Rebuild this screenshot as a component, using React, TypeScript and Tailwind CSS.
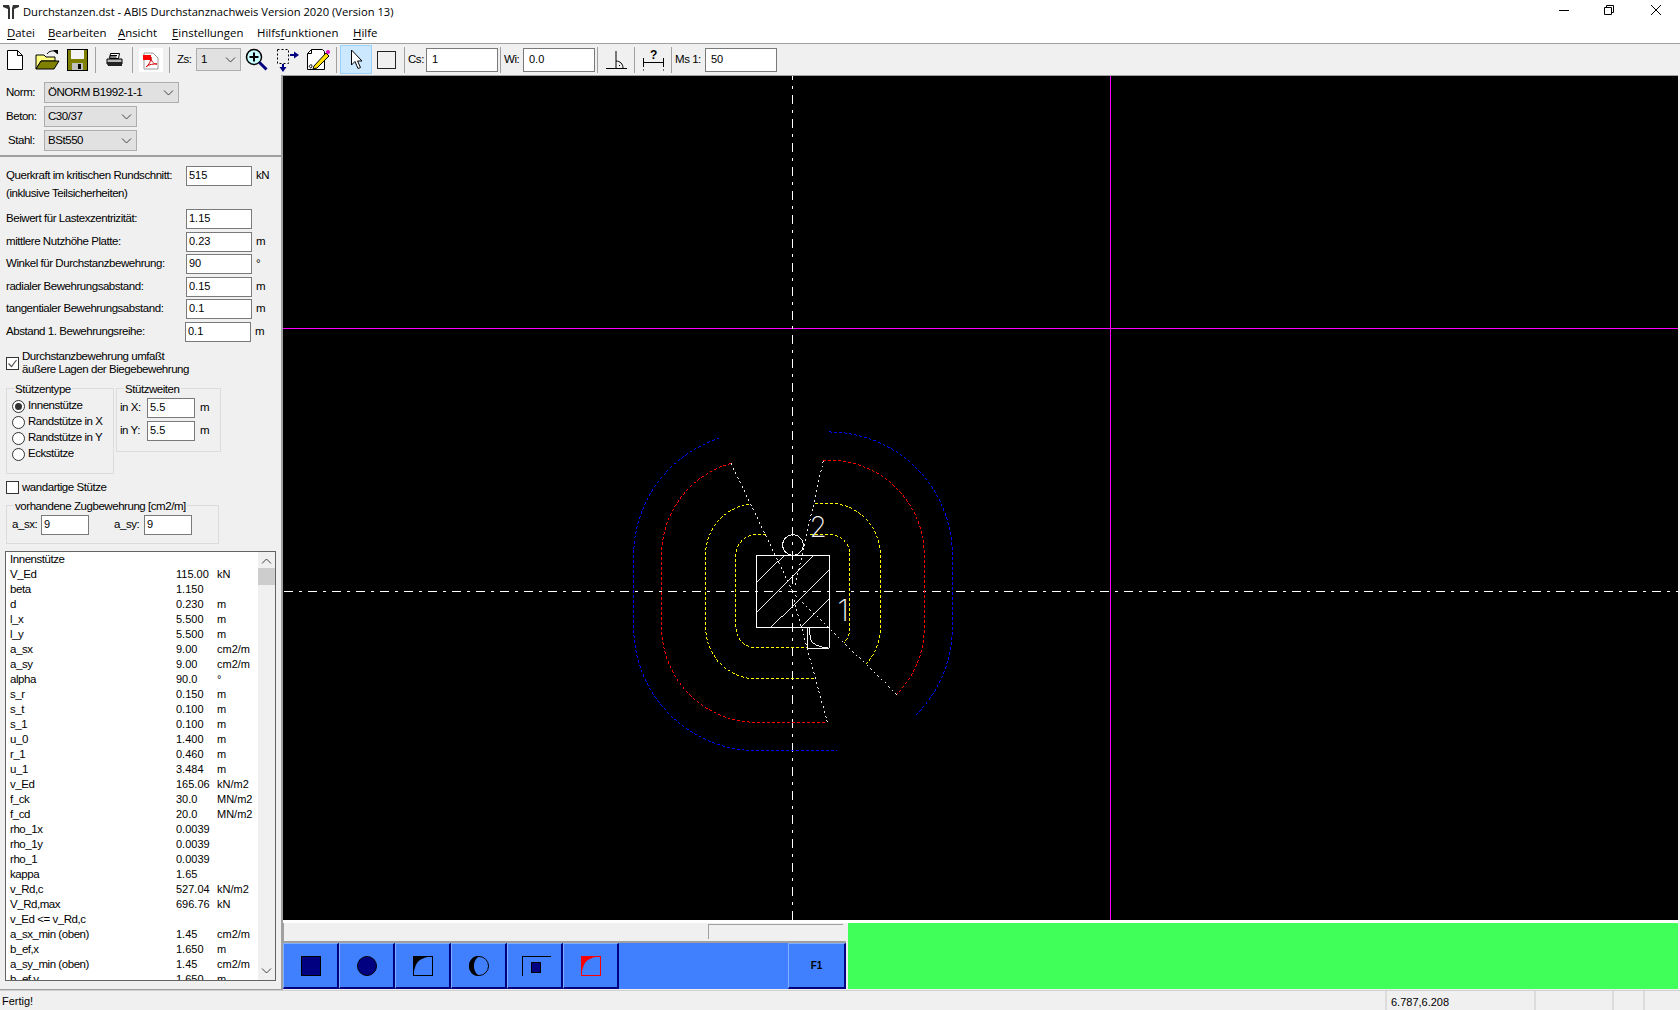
import { ReactNode } from 'react';

const UI_FONT = "font-['Liberation_Sans',Arial,sans-serif]";

const RESULTS: [string, string?, string?][] = [
  ['Innenstütze'],
  ['V_Ed', '115.00', 'kN'],
  ['beta', '1.150'],
  ['d', '0.230', 'm'],
  ['l_x', '5.500', 'm'],
  ['l_y', '5.500', 'm'],
  ['a_sx', '9.00', 'cm2/m'],
  ['a_sy', '9.00', 'cm2/m'],
  ['alpha', '90.0', '°'],
  ['s_r', '0.150', 'm'],
  ['s_t', '0.100', 'm'],
  ['s_1', '0.100', 'm'],
  ['u_0', '1.400', 'm'],
  ['r_1', '0.460', 'm'],
  ['u_1', '3.484', 'm'],
  ['v_Ed', '165.06', 'kN/m2'],
  ['f_ck', '30.0', 'MN/m2'],
  ['f_cd', '20.0', 'MN/m2'],
  ['rho_1x', '0.0039'],
  ['rho_1y', '0.0039'],
  ['rho_1', '0.0039'],
  ['kappa', '1.65'],
  ['v_Rd,c', '527.04', 'kN/m2'],
  ['V_Rd,max', '696.76', 'kN'],
  ['v_Ed <= v_Rd,c'],
  ['a_sx_min (oben)', '1.45', 'cm2/m'],
  ['b_ef,x', '1.650', 'm'],
  ['a_sy_min (oben)', '1.45', 'cm2/m'],
  ['b_ef,y', '1.650', 'm'],
];

function Chevron({ className = '' }: { className?: string }) {
  return (
    <svg width="11" height="6" viewBox="0 0 11 6" className={className} fill="none" stroke="#404040">
      <path d="M1 .5l4.5 4.5L10 .5" />
    </svg>
  );
}

function Select({ value, width }: { value: string; width: string }) {
  return (
    <div className={`flex h-[21px] items-center justify-between border border-[#adadad] bg-[#e1e1e1] pl-[3px] pr-[4px] ${width}`}>
      <span>{value}</span>
      <Chevron />
    </div>
  );
}

function TextBox({ value, className = '' }: { value: string; className?: string }) {
  return (
    <div className={`h-[20px] border border-[#7a7a7a] bg-white pl-[2px] text-[11px] leading-[17px] tracking-normal ${className}`}>{value}</div>
  );
}

function ParamRow({ label, value, unit, mt, inputLeft = 186 }: { label: string; value: string; unit?: string; mt: string; inputLeft?: number }) {
  return (
    <div className={`flex h-[20px] items-center pl-[6px] ${mt}`}>
      <span className={inputLeft === 186 ? 'w-[180px] whitespace-nowrap' : 'w-[179px] whitespace-nowrap'}>{label}</span>
      <TextBox value={value} className="w-[66px]" />
      {unit && <span className="ml-[4px]">{unit}</span>}
    </div>
  );
}

function CheckBox({ checked }: { checked?: boolean }) {
  return (
    <div className="h-[13px] w-[13px] shrink-0 border border-[#333] bg-white">
      {checked && (
        <svg viewBox="0 0 11 11" className="h-full w-full" fill="none" stroke="#555" strokeWidth="1.2">
          <path d="M1.5 5.500l3 3 5-6.500" />
        </svg>
      )}
    </div>
  );
}

function Radio({ label, checked }: { label: string; checked?: boolean }) {
  return (
    <div className="flex h-[16px] items-center">
      <div className="flex h-[13px] w-[13px] items-center justify-center rounded-full border border-[#333] bg-white">
        {checked && <div className="h-[7px] w-[7px] rounded-full bg-[#333]" />}
      </div>
      <span className="ml-[3px]">{label}</span>
    </div>
  );
}

function GroupBox({ title, className, children }: { title: string; className: string; children: ReactNode }) {
  return (
    <div className={`relative border border-[#dcdcdc] ${className}`}>
      <span className="absolute left-[7px] top-[-7px] whitespace-nowrap bg-[#f0f0f0] px-[1px] leading-[14px]">{title}</span>
      {children}
    </div>
  );
}

function MenuItem({ first, rest, pre = '', left }: { first: string; rest: string; pre?: string; left: string }) {
  return (
    <span className={`whitespace-nowrap ${left}`}>
      {pre}
      <span className="underline underline-offset-2">{first}</span>
      {rest}
    </span>
  );
}

const Sep = ({ className }: { className: string }) => <div className={`h-[26px] w-px shrink-0 bg-[#a0a0a0] ${className}`} />;

function ToolbarIcons() {
  return (
    <>
      {/* new */}
      <svg width="18" height="22" viewBox="0 0 18 22" className="ml-[6px] shrink-0">
        <path d="M1.5 1.500h10l5 5v14h-15zM11.500 1.500v5h5" fill="#fff" stroke="#000" />
      </svg>
      {/* open */}
      <svg width="25" height="22" viewBox="0 0 25 22" className="ml-[11px] shrink-0">
        <path d="M1 6h8l2 2h9v4H6L1 20z" fill="#ffff80" stroke="#000" />
        <path d="M1 20l5-8h18l-5 8z" fill="#808000" stroke="#000" />
        <path d="M12 5c2-3 6-4 9-2" fill="none" stroke="#000" />
        <path d="M18 1h5v4h-1z" fill="#000" />
      </svg>
      {/* save */}
      <svg width="21" height="22" viewBox="0 0 21 22" className="ml-[7px] shrink-0">
        <rect x=".5" y=".5" width="20" height="21" fill="#808000" stroke="#000" />
        <rect x="4" y="1" width="13" height="9" fill="#f4f4f4" />
        <rect x="5" y="14" width="11" height="7" fill="#c0c0c0" />
        <rect x="11" y="15" width="3" height="5" fill="#000" />
      </svg>
      <Sep className="ml-[7px]" />
      {/* print */}
      <svg width="17" height="16" viewBox="0 0 17 16" className="ml-[10px] shrink-0">
        <path d="M4.500 1.500h9l-1 5h-9z" fill="#fff" stroke="#000" />
        <path d="M1 7h15v5H1z" fill="#bbb" stroke="#000" />
        <path d="M1 10h15v4H2z" fill="#222" />
        <path d="M4 3.500h7M3.500 5h7" stroke="#000" />
      </svg>
      <Sep className="ml-[9px]" />
      {/* pdf */}
      <svg width="24" height="24" viewBox="0 0 24 24" className="ml-[6px] shrink-0">
        <rect width="24" height="24" fill="#fff" />
        <path d="M5 5h9l5 5v11H5z" fill="#fff" stroke="#999" />
        <rect x="4" y="7" width="8" height="5" fill="#f00" />
        <path d="M7 19c3-2 5-6 5-10 0 4 2 7 6 7-3 0-8 0-11 3z" fill="none" stroke="#d00000" />
      </svg>
      <Sep className="ml-[6px]" />
    </>
  );
}

function Toolbar() {
  return (
    <div className="flex h-[32px] items-center border-t border-[#a0a0a0] bg-[#f0f0f0]">
      <ToolbarIcons />
      <span className="ml-[7px] w-[19px]">Zs:</span>
      <div className="flex h-[23px] w-[45px] items-center justify-between border border-[#adadad] bg-[#e1e1e1] pl-[4px] pr-[4px]">
        <span>1</span>
        <Chevron />
      </div>
      {/* zoom */}
      <svg width="23" height="23" viewBox="0 0 23 23" className="ml-[4px] shrink-0">
        <circle cx="9" cy="9" r="7.500" fill="#c8ffff" stroke="#000" strokeWidth="1.5" />
        <path d="M9 4.500v9M4.500 9h9" stroke="#000" strokeWidth="2" />
        <path d="M14.500 14.500l7 7" stroke="#000080" strokeWidth="3" />
      </svg>
      {/* select to */}
      <svg width="23" height="24" viewBox="0 0 23 24" className="ml-[9px] shrink-0">
        <rect x=".5" y="1.500" width="11" height="14" fill="none" stroke="#000" strokeDasharray="2 2" />
        <path d="M13 7h5" stroke="#000080" strokeWidth="2" />
        <path d="M17 3.500l5 3.500-5 3.500z" fill="#000080" />
        <path d="M6 16v4" stroke="#000080" strokeWidth="2" />
        <path d="M2.500 19h7L6 24z" fill="#000080" />
      </svg>
      {/* edit */}
      <svg width="25" height="23" viewBox="0 0 25 23" className="ml-[6px] shrink-0">
        <path d="M5.500 1.500h11l2 2v18h-17v-16z" fill="#fff" stroke="#000" />
        <path d="M5.500 1.500v4h-4" fill="none" stroke="#000" />
        <path d="M8 18L20 5l3 3-12 12-4 1z" fill="#ffe000" stroke="#000" />
        <circle cx="22" cy="4" r="2" fill="#e000c0" />
        <path d="M3 19c1-3 3-3 3-1s-2 3-2 1" fill="none" stroke="#000" />
      </svg>
      <Sep className="ml-[5px]" />
      <div className="ml-[3px] flex h-[29px] w-[32px] shrink-0 items-center justify-center border border-[#99d1ff] bg-[#cce8ff]">
        <svg width="13" height="21" viewBox="0 0 13 21">
          <path d="M1.500 1v15l3.500-3.500 3 7 2.500-1-3-6.500h4.500z" fill="#fff" stroke="#000" />
        </svg>
      </div>
      <div className="ml-[5px] h-[18px] w-[19px] shrink-0 border border-[#222] bg-[#f0f0f0]" />
      <Sep className="ml-[8px]" />
      <span className="ml-[3px] w-[18px]">Cs:</span>
      <TextBox value="1" className="h-[24px] w-[72px] pl-[5px] leading-[21px]" />
      <Sep className="ml-[2px]" />
      <span className="ml-[3px] w-[19px]">Wi:</span>
      <TextBox value="0.0" className="h-[24px] w-[72px] pl-[5px] leading-[21px]" />
      <Sep className="ml-[2px]" />
      {/* angle */}
      <svg width="22" height="20" viewBox="0 0 22 20" className="ml-[7px] shrink-0">
        <path d="M11 1v18M1 18.500h21" stroke="#000" />
        <path d="M11 11c4 0 7 3 7 7" fill="none" stroke="#000" />
        <rect x="14" y="15" width="1" height="1" fill="#000" />
      </svg>
      <Sep className="ml-[7px]" />
      {/* dimension */}
      <div className="relative ml-[8px] h-[24px] w-[21px] shrink-0">
        <span className="absolute left-[7px] top-[-2px] text-[12px] font-bold">?</span>
        <svg width="21" height="24" viewBox="0 0 21 24" className="absolute left-0 top-0">
          <path d="M.5 10v9M20.500 10v9M0 14.500h21" stroke="#000" />
          <path d="M.5 21.500v1M20.500 21.500v1" stroke="#000" />
        </svg>
      </div>
      <Sep className="ml-[7px]" />
      <span className="ml-[3px] w-[30px]">Ms 1:</span>
      <TextBox value="50" className="h-[24px] w-[72px] pl-[5px] leading-[21px]" />
    </div>
  );
}

function LeftPanel() {
  return (
    <div className="flex h-full w-[281px] shrink-0 flex-col overflow-hidden border-b border-[#a0a0a0] pt-[7px]">
      <div className="flex items-center pl-[6px]">
        <span className="w-[38px]">Norm:</span>
        <Select value="ÖNORM B1992-1-1" width="w-[135px]" />
      </div>
      <div className="mt-[3px] flex items-center pl-[6px]">
        <span className="w-[38px]">Beton:</span>
        <Select value="C30/37" width="w-[93px]" />
      </div>
      <div className="mt-[3px] flex items-center pl-[8px]">
        <span className="w-[36px]">Stahl:</span>
        <Select value="BSt550" width="w-[93px]" />
      </div>
      <div className="mt-[4px] h-[2px] shrink-0 bg-[#a0a0a0]" />
      <ParamRow mt="mt-[9px]" label="Querkraft im kritischen Rundschnitt:" value="515" unit="kN" />
      <div className="h-[17px] pl-[6px] leading-[14px]">(inklusive Teilsicherheiten)</div>
      <ParamRow mt="mt-[6px]" label="Beiwert für Lastexzentrizität:" value="1.15" />
      <ParamRow mt="mt-[3px]" label="mittlere Nutzhöhe Platte:" value="0.23" unit="m" />
      <ParamRow mt="mt-[2px]" label="Winkel für Durchstanzbewehrung:" value="90" unit="°" />
      <ParamRow mt="mt-[3px]" label="radialer Bewehrungsabstand:" value="0.15" unit="m" />
      <ParamRow mt="mt-[2px]" label="tangentialer Bewehrungsabstand:" value="0.1" unit="m" />
      <ParamRow mt="mt-[3px]" inputLeft={185} label="Abstand 1. Bewehrungsreihe:" value="0.1" unit="m" />
      <div className="mt-[8px] flex h-[26px] items-center pl-[6px]">
        <CheckBox checked />
        <span className="ml-[3px] leading-[13px]">
          Durchstanzbewehrung umfaßt
          <br />
          äußere Lagen der Biegebewehrung
        </span>
      </div>
      <div className="ml-[6px] mt-[12px] flex items-start">
        <GroupBox title="Stützentype" className="h-[86px] w-[108px] pl-[5px] pt-[9px]">
          <Radio label="Innenstütze" checked />
          <Radio label="Randstütze in X" />
          <Radio label="Randstütze in Y" />
          <Radio label="Eckstütze" />
        </GroupBox>
        <GroupBox title="Stützweiten" className="ml-[2px] h-[64px] w-[105px] pl-[3px] pt-[9px]">
          <div className="flex h-[20px] items-center">
            <span className="w-[27px]">in X:</span>
            <TextBox value="5.5" className="w-[48px]" />
            <span className="ml-[5px]">m</span>
          </div>
          <div className="mt-[3px] flex h-[20px] items-center">
            <span className="w-[27px]">in Y:</span>
            <TextBox value="5.5" className="w-[48px]" />
            <span className="ml-[5px]">m</span>
          </div>
        </GroupBox>
      </div>
      <div className="mt-[7px] flex h-[13px] shrink-0 items-center pl-[6px]">
        <CheckBox />
        <span className="ml-[3px] pt-[1px]">wandartige Stütze</span>
      </div>
      <GroupBox title="vorhandene Zugbewehrung [cm2/m]" className="ml-[6px] mt-[11px] h-[39px] w-[213px] shrink-0 pl-[5px] pt-[9px]">
        <div className="flex h-[20px] items-center">
          <span className="w-[29px]">a_sx:</span>
          <TextBox value="9" className="w-[48px]" />
          <span className="ml-[25px] w-[30px]">a_sy:</span>
          <TextBox value="9" className="w-[48px]" />
        </div>
      </GroupBox>
      <div className="ml-[5px] mt-[7px] flex h-[430px] w-[271px] shrink-0 border border-[#646464] bg-white">
        <div className="flex-1 overflow-hidden pl-[4px]">
          {RESULTS.map(([name, value, unit], i) => (
            <div key={i} className="flex h-[15px] items-center leading-[15px]">
              <span className="w-[166px] whitespace-nowrap">{name}</span>
              <span className="w-[41px] text-[11px] tracking-normal">{value}</span>
              <span className="text-[11px] tracking-normal">{unit}</span>
            </div>
          ))}
        </div>
        <div className="flex w-[17px] shrink-0 flex-col items-center bg-[#f0f0f0]">
          <Chevron className="mt-[6px] rotate-180" />
          <div className="mt-[4px] h-[17px] w-full bg-[#cdcdcd]" />
          <Chevron className="mb-[6px] mt-auto" />
        </div>
      </div>
    </div>
  );
}

function Canvas() {
  return (
    <div className="h-[844px] shrink-0 bg-black">
      <svg width="1395" height="844" viewBox="283 76 1395 844" className="block" fill="none" shapeRendering="crispEdges">
        <path d="M1110.500 76V920M283 328.500H1678" stroke="#ff00ff" />
        <path d="M283 591.500H1678" stroke="#fff" strokeDasharray="9 6 3 6" strokeDashoffset="-1" />
        <path d="M792.500 76V920" stroke="#fff" strokeDasharray="9 6 3 6" strokeDashoffset="5" />
        <g transform="translate(620 420) scale(.33333)" strokeWidth="3">
          <g strokeDasharray="9 6">
            <g stroke="#ffff00">
              <path d="M437 343H410A62 62 0 0 0 348 405V622A62 62 0 0 0 410 684H565" />
              <path d="M570 343H628A62 62 0 0 1 690 405V622A62 62 0 0 1 672 668" />
              <path d="M388 252A153 153 0 0 0 257 405V622A155 155 0 0 0 410 777H585" />
              <path d="M585 250H628A153 155 0 0 1 781 405V622A155 155 0 0 1 738 732" />
            </g>
            <g stroke="#ff0000">
              <path d="M333 130A285 285 0 0 0 125 405V622A285 285 0 0 0 410 907H618" />
              <path d="M610 121H628A285 285 0 0 1 913 405V622A285 285 0 0 1 830 823" />
            </g>
            <g stroke="#0000ff">
              <path d="M298 55A369 369 0 0 0 41 405V622A370 370 0 0 0 410 992H652" />
              <path d="M628 36A369 369 0 0 1 997 405V622A370 370 0 0 1 888 885" />
            </g>
          </g>
          <g stroke="#e8e8e8" strokeDasharray="6 9">
            <path d="M333 130L518 514M610 122L525 500M622 907L522 540M830 823L520 520" />
          </g>
          <g stroke="#f0f0f0">
            <rect x="409" y="406" width="219" height="216" stroke="#fff" />
            <path d="M410 487L493 406M410 577L580 407M453 622L628 450M543 622L628 537" />
            <path d="M563 622V685H628V622" />
            <path d="M567 625L572 660Q578 678 628 685" />
            <circle cx="519" cy="375" r="31" />
            <path d="M498 352C484 365 484 385 498 398" />
          </g>
        </g>
        <g fontFamily="Inter, sans-serif" fontWeight="200" fill="#f0f0f0" textAnchor="middle" shapeRendering="auto">
          <text x="843" y="621" fontSize="30">1</text>
          <text x="818" y="537" fontSize="28">2</text>
        </g>
      </svg>
    </div>
  );
}

function ToolButton({ children, w = 'w-[56px]' }: { children?: ReactNode; w?: string }) {
  return (
    <div className={`flex h-[46px] shrink-0 items-center justify-center border-b-2 border-l border-r-2 border-t border-b-[#000080] border-l-[#80b0ff] border-r-[#000080] border-t-[#80b0ff] ${w}`}>
      {children}
    </div>
  );
}

const CornerIcon = ({ color }: { color: string }) => (
  <svg width="20" height="20" viewBox="0 0 20 20">
    <path d="M0 0H20C12 1 7 3 4 7 2 10 1 15 0 20z" fill={color} />
    <rect x=".5" y=".5" width="19" height="19" fill="none" stroke={color} />
  </svg>
);

function BottomBar() {
  return (
    <div className="flex h-[66px] shrink-0">
      <div className="flex w-[565px] shrink-0 flex-col pr-[2px]">
        <div className="flex h-[20px] justify-end border-b-2 border-l border-[#a0a0a0] bg-[#f0f0f0] pb-[2px] pt-[1px]">
          <div className="mr-[3px] w-[135px] border-l border-t border-[#a0a0a0]" />
        </div>
        <div className="flex h-[46px] bg-[#4080ff]">
          <ToolButton>
            <div className="h-[20px] w-[20px] border border-black bg-[#000080]" />
          </ToolButton>
          <ToolButton>
            <div className="h-[20px] w-[20px] rounded-full border border-black bg-[#000080]" />
          </ToolButton>
          <ToolButton>
            <CornerIcon color="#000" />
          </ToolButton>
          <ToolButton>
            <svg width="20" height="22" viewBox="0 0 20 22">
              <circle cx="10" cy="11" r="9.500" fill="none" stroke="#000" />
              <path d="M10 1C3 1 0 6 0 11s3 10 10 10C6 18 5 14 5 11s1-7 5-10z" fill="#000" />
            </svg>
          </ToolButton>
          <ToolButton>
            <div className="relative ml-[3px] h-[20px] w-[29px]">
              <div className="h-full w-full border-l border-t border-black" />
              <div className="absolute left-[9px] top-[6px] h-[11px] w-[10px] border border-black bg-[#000080]" />
            </div>
          </ToolButton>
          <ToolButton>
            <CornerIcon color="#f00" />
          </ToolButton>
          <div className="flex-1" />
          <ToolButton w="w-[58px]">
            <span className="text-[10px] font-bold tracking-normal">F1</span>
          </ToolButton>
        </div>
      </div>
      <div className="w-[830px] bg-[#40ff58]" />
    </div>
  );
}

export default function App() {
  return (
    <div className={`flex h-[1010px] w-[1680px] flex-col overflow-hidden bg-[#f0f0f0] text-[11.5px] tracking-[-0.45px] text-black ${UI_FONT}`}>
      <div className="flex h-[24px] shrink-0 items-center bg-white pl-[3px] font-['Open_Sans',sans-serif] text-[11.2px] tracking-normal">
        <svg width="16" height="16" viewBox="0 0 16 16" fill="#333">
          <path d="M0 1h6l1 3v11H5V5L0 3zM16 1h-6L9 4v11h2V5l5-2z" />
        </svg>
        <span className="ml-[4px]">Durchstanzen.dst - ABIS Durchstanznachweis Version 2020 (Version 13)</span>
        <div className="ml-auto -mt-[4px] flex items-center">
          <svg width="12" height="12" viewBox="0 0 12 12" stroke="#000" fill="none" className="mr-[33px]">
            <path d="M1 6.500h10" />
          </svg>
          <svg width="12" height="12" viewBox="0 0 12 12" stroke="#000" fill="none" className="mr-[35px]">
            <path d="M1.500 3.500h7v7h-7zM3.500 3V1.500h7v7H9" />
          </svg>
          <svg width="12" height="12" viewBox="0 0 12 12" stroke="#000" fill="none" className="mr-[18px]">
            <path d="M1 1l10 10M11 1L1 11" />
          </svg>
        </div>
      </div>
      <div className="flex h-[19px] shrink-0 items-center bg-white pb-[2px] font-['Open_Sans',sans-serif] text-[11.4px] tracking-normal">
        <MenuItem left="ml-[7px] w-[41px]" first="D" rest="atei" />
        <MenuItem left="w-[70px]" first="B" rest="earbeiten" />
        <MenuItem left="w-[54px]" first="A" rest="nsicht" />
        <MenuItem left="w-[85px]" first="E" rest="instellungen" />
        <MenuItem left="w-[96px]" pre="Hilfs" first="f" rest="unktionen" />
        <MenuItem left="" first="H" rest="ilfe" />
      </div>
      <Toolbar />
      <div className="flex min-h-0 flex-1">
        <LeftPanel />
        <div className="w-[2px] shrink-0 bg-[#a0a0a0]" />
        <div className="flex w-[1395px] shrink-0 flex-col">
          <div className="h-px bg-[#a0a0a0]" />
          <Canvas />
          <div className="h-[3px] bg-white" />
          <BottomBar />
        </div>
      </div>
      <div className="flex h-[20px] shrink-0 items-center border-t border-[#d0d0d0] text-[11px] tracking-normal">
        <span className="w-[1385px] pl-[2px] pt-[2px]">Fertig!</span>
        <span className="h-full w-[149px] border-l-2 border-[#dcdcdc] pl-[4px] pt-[3px]">6.787,6.208</span>
        <span className="h-full w-[78px] border-l-2 border-[#dcdcdc]" />
        <span className="h-full w-[31px] border-l-2 border-[#dcdcdc]" />
        <span className="h-full flex-1 border-l-2 border-[#dcdcdc]" />
      </div>
    </div>
  );
}
